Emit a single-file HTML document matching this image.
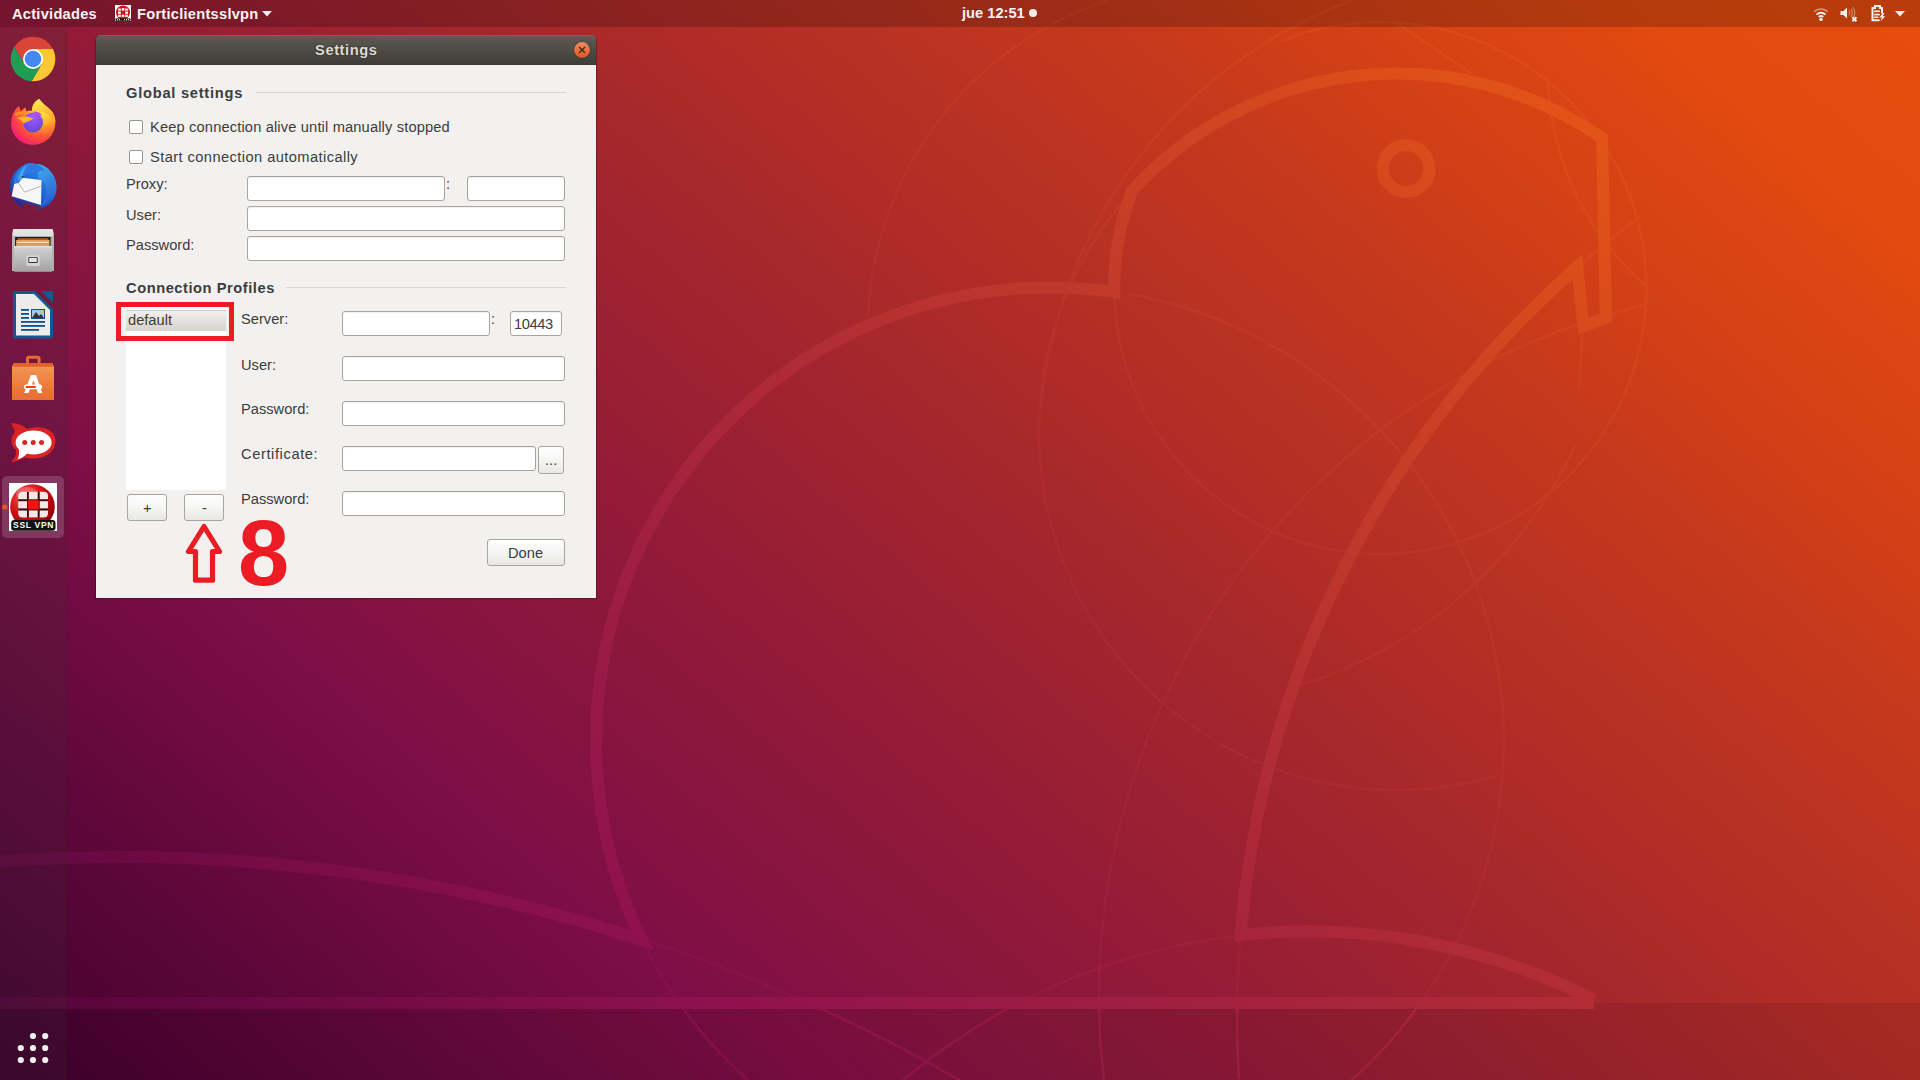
<!DOCTYPE html>
<html>
<head>
<meta charset="utf-8">
<style>
html,body{margin:0;padding:0;width:1920px;height:1080px;overflow:hidden;}
body{position:relative;font-family:"Liberation Sans",sans-serif;background:#8c1839;}
#bg{position:absolute;left:0;top:0;width:1920px;height:1080px;background:linear-gradient(41deg,rgb(64, 0, 46) 0%,rgb(126, 14, 70) 25%,rgb(160, 35, 47) 50%,rgb(200, 58, 27) 75%,rgb(212, 64, 22) 80.4%,rgb(218, 68, 20) 85.3%,rgb(227, 74, 16) 90.9%,rgb(232, 77, 13) 100%);}
#art{position:absolute;left:0;top:0;}
#band{position:absolute;left:0;top:1003px;width:1920px;height:77px;background:rgba(0,0,0,0.08);}
#topbar{position:absolute;left:0;top:0;width:1920px;height:27px;background:rgba(0,0,0,0.20);color:#f4f4f2;font-weight:bold;font-size:14.67px;}
#dock{position:absolute;left:0;top:27px;width:66px;height:1053px;background:rgba(52,52,52,0.17);border-right:1px solid rgba(40,30,40,0.18);}
.t{position:absolute;line-height:17px;white-space:nowrap;font-size:14.67px;color:#3c3c3c;}
.b{font-weight:bold;}
.e{position:absolute;box-sizing:border-box;background:#fff;border:1px solid #a8a49d;border-radius:3px;box-shadow:inset 0 1px 1px rgba(0,0,0,0.06);}
.cb{position:absolute;box-sizing:border-box;width:14px;height:14px;background:#fff;border:1px solid #99958e;border-radius:2px;}
.btn{position:absolute;box-sizing:border-box;border:1px solid #a9a59e;border-radius:3px;background:linear-gradient(#fefefe 0%,#f6f6f5 45%,#e9e8e6 100%);}
.sep{position:absolute;height:1px;background:#d9d6d1;}
.ic{position:absolute;}
</style>
</head>
<body>
<div id="bg"></div>
<div id="band"></div>
<svg id="art" width="1920" height="1080" viewBox="0 0 1920 1080">
 <defs><linearGradient id="gk" gradientUnits="userSpaceOnUse" x1="279.4" y1="1322.9" x2="1640.6" y2="-242.9"><stop offset="0%" stop-color="rgb(77, 2, 57)"/><stop offset="25%" stop-color="rgb(142, 17, 79)"/><stop offset="50%" stop-color="rgb(174, 42, 55)"/><stop offset="75%" stop-color="rgb(211, 71, 32)"/><stop offset="80.4%" stop-color="rgb(222, 78, 26)"/><stop offset="85.3%" stop-color="rgb(228, 83, 24)"/><stop offset="90.9%" stop-color="rgb(237, 90, 19)"/><stop offset="100%" stop-color="rgb(242, 93, 16)"/></linearGradient><linearGradient id="gt" gradientUnits="userSpaceOnUse" x1="279.4" y1="1322.9" x2="1640.6" y2="-242.9"><stop offset="0%" stop-color="rgb(70, 1, 51)"/><stop offset="25%" stop-color="rgb(134, 16, 75)"/><stop offset="50%" stop-color="rgb(167, 39, 51)"/><stop offset="75%" stop-color="rgb(205, 64, 30)"/><stop offset="80.4%" stop-color="rgb(217, 71, 24)"/><stop offset="85.3%" stop-color="rgb(223, 75, 22)"/><stop offset="90.9%" stop-color="rgb(232, 82, 18)"/><stop offset="100%" stop-color="rgb(237, 85, 15)"/></linearGradient></defs>
 <g fill="none" stroke="url(#gt)" stroke-width="2.5">
  <path d="M 1280.8 41.4 A 266 266 0 1 1 1132.7 190.9"/>
  <path d="M 1398 24 L 1472 74"/>
  <path d="M 1498.7 775.3 A 358 358 0 0 1 1132.2 191.1"/>
  <path d="M 868.3 316.1 A 346 346 0 0 1 1107.1 0.9"/>
  <path d="M 1039.6 426.7 A 481 481 0 0 1 1371.4 -6.5"/>
  <path d="M 1128.6 294.1 A 453.9 453.9 0 0 1 1341.6 1088.8"/>
  <path d="M 1647.2 287.1 A 285 285 0 0 1 1548.2 80.9"/>
  <path d="M 1567.3 276.2 A 998.3 998.3 0 0 1 1641.5 215.6"/>
  <path d="M 1238.9 1079.0 A 998.3 998.3 0 0 1 1240.8 931.1"/>
  <path d="M 640.2 938.4 A 1660 1660 0 0 1 972.5 1087.7"/>
  <path d="M 752.0 1083.7 A 453.9 453.9 0 0 1 641.8 940.1"/>
  <path d="M 895.7 1086.5 A 630 630 0 0 1 1239.9 935.8"/>
  <path d="M 1104.3 1083.8 A 712 712 0 0 1 1644.8 304.7"/>
  <path d="M 1574.9 445.8 A 449 449 0 0 1 1297.0 686.1"/>
  <path d="M 1583 326 L 1579 390"/>
 </g>
 <g fill="none" stroke="url(#gk)" stroke-width="12" stroke-linejoin="miter">
  <path d="M -5 862 A 1660 1660 0 0 1 641.8 940 A 453.9 453.9 0 0 1 1114.4 292 A 266 266 0 0 1 1132 191 A 358 358 0 0 1 1602 138 L 1606 318 L 1583.5 326 L 1577.3 267 A 998.3 998.3 0 0 0 1240.5 935 A 630 630 0 0 1 1594 1000"/>
  <path d="M -5 1003 L 1594 1003"/>
  <circle cx="1406" cy="168.5" r="23.5" stroke-width="12"/>
 </g>
</svg>

<!-- top bar -->
<div id="topbar">
 <div class="t" style="left:12px;top:6px;color:#f4f4f2;font-weight:bold;letter-spacing:0.25px;">Actividades</div>
 <svg class="ic" style="left:115px;top:5px" width="16" height="16" viewBox="0 0 16 16">
  <rect x="0" y="0" width="16" height="16" fill="#fff"/>
  <circle cx="8" cy="7.5" r="7" fill="#d0121b"/>
  <g fill="#fff"><rect x="3.2" y="3.5" width="2.6" height="2.2"/><rect x="6.7" y="3.2" width="2.6" height="2.4"/><rect x="10.2" y="3.5" width="2.6" height="2.2"/>
  <rect x="3" y="6.6" width="2.8" height="2.2"/><rect x="10.2" y="6.6" width="2.8" height="2.2"/>
  <rect x="3.2" y="9.7" width="2.6" height="2.2"/><rect x="6.7" y="9.7" width="2.6" height="2.2"/><rect x="10.2" y="9.7" width="2.6" height="2.2"/></g>
  <rect x="0.5" y="13.4" width="15" height="2.4" fill="#111"/><g fill="#ddd"><rect x="2" y="14" width="1" height="1.2"/><rect x="4" y="14" width="1" height="1.2"/><rect x="9" y="14" width="1" height="1.2"/><rect x="11" y="14" width="1" height="1.2"/><rect x="13" y="14" width="1" height="1.2"/></g>
 </svg>
 <div class="t" style="left:137px;top:6px;color:#f4f4f2;font-weight:bold;letter-spacing:0.25px;">Forticlientsslvpn</div>
 <svg class="ic" style="left:262px;top:11px" width="10" height="6" viewBox="0 0 10 6"><path d="M0 0 L10 0 L5 5.5 Z" fill="#f0f0ee"/></svg>
 <div class="t" style="left:962px;top:5px;color:#f4f4f2;font-weight:bold;">jue 12:51</div>
 <div style="position:absolute;left:1029px;top:9px;width:8px;height:8px;border-radius:50%;background:#eeeeec;"></div>
 <!-- wifi -->
 <svg class="ic" style="left:1813px;top:6px" width="16" height="16" viewBox="0 0 16 16">
  <path d="M1.2 5.8 A9.5 9.5 0 0 1 14.8 5.8" stroke="rgba(255,255,255,0.45)" stroke-width="1.6" fill="none"/>
  <path d="M3.6 8.6 A6.2 6.2 0 0 1 12.4 8.6" stroke="#f2f2f2" stroke-width="1.8" fill="none"/>
  <path d="M5.8 11 A3.2 3.2 0 0 1 10.2 11" stroke="#f2f2f2" stroke-width="1.8" fill="none"/>
  <circle cx="8" cy="13.4" r="1.7" fill="#f2f2f2"/>
 </svg>
 <!-- volume -->
 <svg class="ic" style="left:1840px;top:6px" width="18" height="16" viewBox="0 0 18 16">
  <path d="M0.5 5 L3.5 5 L7 1.5 L7 12.5 L3.5 9 L0.5 9 Z" fill="#f2f2f2"/>
  <path d="M9 4.5 Q10.5 7 9 9.5 M11 2.8 Q13.5 7 11 11.2 M13 1 Q16.5 7 13 13" stroke="rgba(255,255,255,0.35)" stroke-width="1.3" fill="none"/>
  <path d="M12.4 11.2 L16.4 15.2 M16.4 11.2 L12.4 15.2" stroke="#f2f2f2" stroke-width="2"/>
 </svg>
 <!-- battery -->
 <svg class="ic" style="left:1870px;top:4px" width="16" height="18" viewBox="0 0 16 18">
  <path d="M12 9.5 L12 4 L10 4 L10 2 L5 2 L5 4 L2.5 4 L2.5 16.2 L9.6 16.2" stroke="#f2f2f2" stroke-width="2" fill="none"/>
  <rect x="4.2" y="6.4" width="5.6" height="1.7" fill="#f2f2f2"/><rect x="4.2" y="9.75" width="5.6" height="1.7" fill="#f2f2f2"/><rect x="4.2" y="12.5" width="4.2" height="1.5" fill="#f2f2f2"/>
  <path d="M12.8 9 L9.4 13.6 L12 13.6 L10.4 17.4 L15.2 12.2 L12.8 12.2 L14.4 9 Z" fill="#f2f2f2"/>
 </svg>
 <svg class="ic" style="left:1895px;top:11px" width="10" height="6" viewBox="0 0 10 6"><path d="M0 0 L10 0 L5 5.5 Z" fill="#f0f0ee"/></svg>
</div>

<!-- dock -->
<div id="dock"></div>
<svg style="position:absolute;left:0;top:27px" width="67" height="1053" viewBox="0 27 67 1053"><defs>
<radialGradient id="ffo" cx="0.7" cy="0.2" r="0.9"><stop offset="0" stop-color="#fff44f"/><stop offset="0.35" stop-color="#ffa52a"/><stop offset="0.7" stop-color="#ff4a3d"/><stop offset="1" stop-color="#e31587"/></radialGradient>
<linearGradient id="ffp" x1="0" y1="0" x2="0.3" y2="1"><stop offset="0" stop-color="#b833e1"/><stop offset="1" stop-color="#5b4fd6"/></linearGradient>
<linearGradient id="tbb" x1="0" y1="0" x2="1" y2="1"><stop offset="0" stop-color="#3aa0f0"/><stop offset="1" stop-color="#1f4fb8"/></linearGradient>
<linearGradient id="fcab" x1="0" y1="0" x2="0" y2="1"><stop offset="0" stop-color="#e6e6e6"/><stop offset="1" stop-color="#a7a7a7"/></linearGradient>
<linearGradient id="bag" x1="0" y1="0" x2="0" y2="1"><stop offset="0" stop-color="#f29a5a"/><stop offset="1" stop-color="#e8692c"/></linearGradient>
<radialGradient id="vpn" cx="0.35" cy="0.3" r="0.8"><stop offset="0" stop-color="#ff5555"/><stop offset="0.5" stop-color="#d40f14"/><stop offset="1" stop-color="#7a0005"/></radialGradient>
</defs><g><path d="M33.00 49.00 L52.93 49.00 A22.3 22.3 0 0 0 14.37 46.74 L24.34 64.00 L33 59 Z" fill="#db4437"/><path d="M41.66 64.00 L31.69 81.26 A22.3 22.3 0 0 0 52.93 49.00 L33.00 49.00 L33 59 Z" fill="#fcc934"/><path d="M24.34 64.00 L14.37 46.74 A22.3 22.3 0 0 0 31.69 81.26 L41.66 64.00 L33 59 Z" fill="#1e9e55"/><circle cx="33" cy="59" r="10.00" fill="#fff"/><circle cx="33" cy="59" r="8.3" fill="#4688f1"/></g><g>
<radialGradient id="ffb" cx="0.72" cy="0.25" r="0.95"><stop offset="0" stop-color="#fff04a"/><stop offset="0.3" stop-color="#ffb02a"/><stop offset="0.62" stop-color="#ff4f36"/><stop offset="0.85" stop-color="#f5246a"/><stop offset="1" stop-color="#e0108c"/></radialGradient>
<linearGradient id="ffl" x1="0" y1="0" x2="0.4" y2="1"><stop offset="0" stop-color="#fff44f"/><stop offset="1" stop-color="#ffa82a"/></linearGradient>
<radialGradient id="ffg" cx="0.5" cy="0.2" r="0.9"><stop offset="0" stop-color="#a45cff"/><stop offset="0.6" stop-color="#7a4be8"/><stop offset="1" stop-color="#4f4fc8"/></radialGradient>
<path d="M11.6 119 C12.5 113 15.5 108.5 19 106 L20.6 111.2 L25.2 107.4 L26.4 111.3 Q29 110.6 32 110.6 C32 104.5 35.5 100.5 39.2 98.9 C42.5 103 46 106 49 108.5 C53.5 112.5 55.6 117 55.3 123 C55.3 135 45.5 144.8 33 144.8 C20.5 144.8 11 135.5 11 123.5 Z" fill="url(#ffb)"/>
<path d="M32 110.8 C32 104.5 35.5 100.5 39.2 98.9 C42.5 103 46 106 49 108.5 C53.5 112.5 55.6 117 55.3 123 C53 118 48 114 42 112 Z" fill="url(#ffl)"/>
<circle cx="33" cy="122.5" r="10" fill="url(#ffg)"/>
<path d="M16.2 118.6 C20 116.4 27 115.2 33.2 118.6 C30.5 121.2 26.5 121.5 23.6 123.6 C22.2 120.2 19.5 119 16.2 118.6 Z" fill="#ffb52c"/>
<path d="M14 114 C18 111.5 23 111 26.5 113 C22 113 18.5 114.5 16.5 116.5 Z" fill="#ff9a1f" opacity="0.8"/>
<path d="M33.5 111.6 C37.5 111.2 40.5 112.8 42 115.6 C40 115.2 38.2 115.6 37 116.2 Z" fill="#c04ae6"/>
</g><g>
<linearGradient id="tbr" x1="0.8" y1="0.1" x2="0.2" y2="0.9"><stop offset="0" stop-color="#2f8ff0"/><stop offset="0.55" stop-color="#1f5fcf"/><stop offset="1" stop-color="#2a2585"/></linearGradient>
<linearGradient id="tbf" x1="0" y1="0" x2="0.3" y2="1"><stop offset="0" stop-color="#41b2f5"/><stop offset="1" stop-color="#2a62d0"/></linearGradient>
<circle cx="33.2" cy="187" r="23.4" fill="url(#tbr)"/>
<path d="M21 202.5 L40.8 206.2 L35 211.2 L26 210.5 Z" fill="rgb(122,26,61)"/>
<path d="M15.4 177.1 L41.5 180 L41 205.1 L11.7 196.3 Z" fill="#f6f6f7"/>
<path d="M15.8 179 L24.5 192.2 L41.2 186" stroke="#77777f" stroke-width="0.5" fill="none"/>
<path d="M38.5 178 C44 180 47 186 46 193 C45 199 43 203 40.5 207 C45 205 50 200 52 195 C55 188 55 180 52 174 C49 168 44 165 38 164 Z" fill="url(#tbf)"/>
<path d="M13.8 184 C14.5 173 20 165.5 28 163.2 C35 162.5 41 165.5 45 170.5 C40.5 170 37 171.5 34.8 175 C31.5 171.8 26.5 172.3 23.5 176.5 L18.5 183 Z" fill="#2b7be0"/>
<path d="M18 180 C19 172 23 167 28 164.5 C24 169 22.5 174 22.5 179 Z" fill="#4fb8f5" opacity="0.7"/>
<circle cx="22.6" cy="176.9" r="0.9" fill="#222"/>
</g><g>
<linearGradient id="fdr" x1="0" y1="0" x2="0" y2="1"><stop offset="0" stop-color="#d2d2d2"/><stop offset="1" stop-color="#a3a3a3"/></linearGradient>
<linearGradient id="fcap" x1="0" y1="0" x2="0" y2="1"><stop offset="0" stop-color="#e4e4e4"/><stop offset="1" stop-color="#c4c4c4"/></linearGradient>
<path d="M13.2 229 L52.5 229 L53.7 233 L53.7 271 L12.3 271 L12.3 233 Z" fill="url(#fcap)"/>
<rect x="12.3" y="236" width="41.4" height="35" fill="#b4b4b4"/>
<rect x="15.1" y="237" width="35.5" height="9" fill="#1c1c1c"/>
<rect x="17.5" y="238.2" width="31" height="2.2" fill="#c4561c"/>
<rect x="16.1" y="240" width="33.5" height="6" fill="#eca452"/>
<rect x="17" y="242.2" width="31.5" height="0.9" fill="#fff6e8"/>
<rect x="16.1" y="243.6" width="33.5" height="0.6" fill="#d06a28"/>
<rect x="14.1" y="246.3" width="37.8" height="25.5" fill="url(#fdr)"/>
<rect x="14.1" y="246.3" width="37.8" height="1" fill="#e8e8e8"/>
<rect x="26.3" y="255.2" width="13.4" height="10.9" rx="1.5" fill="#d4d4d4"/>
<rect x="28.3" y="257" width="9.4" height="6" rx="1" fill="#333"/>
<rect x="29.2" y="257.8" width="7.6" height="4.2" fill="#e2e2e2"/>
</g><g>
<path d="M13 293 Q13 291 15 291 L35 291 L53 309 L53 336.5 Q53 338.5 51 338.5 L15 338.5 Q13 338.5 13 336.5 Z" fill="#0f5a8e"/>
<path d="M16 294 L34 294 L50 310 L50 335.5 L16 335.5 Z" fill="#ececec"/>
<path d="M40.8 291 L51.3 291 Q53 291 53 292.7 L53 303 Z" fill="#0f5a8e"/>
<g fill="#10508a"><rect x="21" y="309" width="8" height="1.8"/><rect x="21" y="313" width="8" height="1.8"/><rect x="21" y="317" width="8" height="1.8"/>
<rect x="21" y="321" width="24" height="1.8"/><rect x="21" y="325" width="24" height="1.8"/><rect x="21" y="329" width="18" height="1.8"/></g>
<rect x="31" y="309" width="14" height="10" fill="#10508a"/><rect x="32" y="310" width="12" height="8" fill="#9ccbe8"/>
<path d="M41.2 310 L44 310 L44 313.2 A3 3 0 0 1 41.2 310 Z" fill="#e8c23a"/><path d="M32 318 L36 312 L39 316 L41 314 L44 318 Z" fill="#333"/>
</g><g>
<path d="M27.5 370.7 L27.5 358.6 Q27.5 357.2 29 357.2 L37.6 357.2 Q39.1 357.2 39.1 358.6 L39.1 370.7" stroke="#ea6c2c" stroke-width="2.9" fill="none"/>
<path d="M14 362.9 L52 362.9 L54 366.5 L54 400 L12 400 L12 366.5 Z" fill="url(#bag)"/>
<path d="M14 362.9 L52 362.9 L54 366.8 L12 366.8 Z" fill="#e2612a"/>
<rect x="12" y="389.3" width="42" height="10.7" fill="#e8743c" opacity="0.5"/>
<path d="M30.9 375 L36.1 375 L42.2 393 L38 393 L33.5 380.6 L28.4 393 L24.2 393 Z" fill="#fff"/>
<rect x="23.9" y="384.6" width="18.3" height="4.6" rx="2.3" fill="#fff"/>
<rect x="25.5" y="386" width="10.4" height="1.9" rx="0.9" fill="#e2470e"/>
</g><g>
<path d="M11 423 C18 423 24 426 27 429 C36 425.5 48.5 427 53.5 434 C57.5 440 56 452 44 456.5 C37 459.5 29 458.5 25 457.5 C20 460 15 462 11 462 C15 458 17 454 16 450 C10 445 10 437 15 432 C14 428 12 425 11 423 Z" fill="#db2323"/>
<ellipse cx="33.6" cy="442.5" rx="18" ry="11.9" fill="#fff"/>
<path d="M18.6 447 C19.6 451.5 19.2 456 17.5 459.5 C21 458.5 24.5 456.5 27.2 453.6 Z" fill="#fff"/>
<circle cx="24.7" cy="442.5" r="2.5" fill="#db2323"/><circle cx="33.2" cy="442.5" r="2.5" fill="#db2323"/><circle cx="41.5" cy="442.5" r="2.5" fill="#db2323"/>
</g><rect x="2" y="476" width="62" height="62" rx="5" fill="rgba(255,255,255,0.16)"/>
<circle cx="4.8" cy="507" r="2.6" fill="#e95420"/>
<g>
<rect x="9" y="483" width="48" height="48" fill="#fff"/>
<circle cx="32.5" cy="506.5" r="22.3" fill="url(#vpn)"/>
<ellipse cx="27" cy="494" rx="11" ry="7" fill="#fff" opacity="0.22"/>
<rect x="18.4" y="492" width="29.4" height="25.2" rx="3" fill="#3a0606"/>
<g fill="#f6e6e6">
<path d="M18.2 499.3 L18.2 496 Q18.2 491.8 22.4 491.8 L27 491.8 L27 499.3 Z"/>
<rect x="28.8" y="491.8" width="8.9" height="7.5"/>
<path d="M39.7 491.8 L43.8 491.8 Q48 491.8 48 496 L48 499.3 L39.7 499.3 Z"/>
<rect x="18.2" y="501.2" width="8.8" height="7.2"/>
<rect x="39.7" y="501.2" width="8.3" height="7.2"/>
<path d="M18.2 510.4 L27 510.4 L27 517.4 L22.4 517.4 Q18.2 517.4 18.2 513.2 Z"/>
<rect x="28.8" y="510.4" width="8.9" height="7"/>
<path d="M39.7 510.4 L48 510.4 L48 513.2 Q48 517.4 43.8 517.4 L39.7 517.4 Z"/>
</g>
<rect x="27.8" y="500.2" width="10.9" height="9.2" fill="#ff1010"/>
<rect x="11.2" y="520" width="44.3" height="10.8" rx="3" fill="#111"/>
<text x="33.6" y="528.3" text-anchor="middle" font-family="Liberation Sans" font-weight="bold" font-size="8.5" fill="#fff" letter-spacing="0.7">SSL VPN</text>
</g<circle cx="20.8" cy="1036" r="3.1" fill="#eeeeec"/><circle cx="33" cy="1036" r="3.1" fill="#eeeeec"/><circle cx="45.2" cy="1036" r="3.1" fill="#eeeeec"/><circle cx="20.8" cy="1048" r="3.1" fill="#eeeeec"/><circle cx="33" cy="1048" r="3.1" fill="#eeeeec"/><circle cx="45.2" cy="1048" r="3.1" fill="#eeeeec"/><circle cx="20.8" cy="1060" r="3.1" fill="#eeeeec"/><circle cx="33" cy="1060" r="3.1" fill="#eeeeec"/><circle cx="45.2" cy="1060" r="3.1" fill="#eeeeec"/></svg>

<!-- dialog -->
<div style="position:absolute;left:96px;top:40px;width:500px;height:558px;background:#f2f1f0;box-shadow:0 0 1px 1px rgba(40,0,20,0.3);"></div>
<div style="position:absolute;left:96px;top:35px;width:500px;height:30px;border-radius:5px 5px 0 0;background:linear-gradient(#5f5d55 0%,#57554d 20%,#48473f 70%,#3d3c37 100%);box-shadow:inset 0 1px 0 rgba(255,255,255,0.08);"></div>
<div class="t b" style="left:315px;top:42px;color:#dfdbd2;letter-spacing:0.6px;text-shadow:0 0 2px rgba(0,0,0,0.6);">Settings</div>
<svg class="ic" style="left:572px;top:40px" width="20" height="20" viewBox="0 0 20 20">
 <defs><linearGradient id="cg" x1="0" y1="0" x2="0" y2="1"><stop offset="0" stop-color="#f58c66"/><stop offset="1" stop-color="#e5561f"/></linearGradient></defs>
 <circle cx="10" cy="10" r="8.6" fill="#2e2d2a" opacity="0.55"/>
 <circle cx="10" cy="10" r="7.9" fill="url(#cg)"/>
 <path d="M7 7 L13 13 M13 7 L7 13" stroke="#2c2a20" stroke-width="1.3"/>
</svg>

<div class="t b" style="left:126px;top:85px;letter-spacing:0.75px;">Global settings</div>
<div class="sep" style="left:256px;top:92px;width:310px;"></div>

<div class="cb" style="left:129px;top:120px;"></div>
<div class="t" style="left:150px;top:119px;letter-spacing:0.15px;">Keep connection alive until manually stopped</div>
<div class="cb" style="left:129px;top:150px;"></div>
<div class="t" style="left:150px;top:149px;letter-spacing:0.42px;">Start connection automatically</div>

<div class="t" style="left:126px;top:176px;">Proxy:</div>
<div class="e" style="left:247px;top:176px;width:198px;height:25px;"></div>
<div class="t" style="left:446px;top:176px;">:</div>
<div class="e" style="left:467px;top:176px;width:98px;height:25px;"></div>
<div class="t" style="left:126px;top:207px;">User:</div>
<div class="e" style="left:247px;top:206px;width:318px;height:25px;"></div>
<div class="t" style="left:126px;top:237px;">Password:</div>
<div class="e" style="left:247px;top:236px;width:318px;height:25px;"></div>

<div class="t b" style="left:126px;top:280px;letter-spacing:0.55px;">Connection Profiles</div>
<div class="sep" style="left:286px;top:287px;width:280px;"></div>

<!-- list -->
<div style="position:absolute;left:126px;top:306px;width:100px;height:184px;background:#fff;"></div>
<div style="position:absolute;left:126px;top:310px;width:100px;height:21px;background:linear-gradient(#f1f0ee,#d6d3cf);border-top:1px solid #cfccc7;box-sizing:border-box;"></div>
<div class="t" style="left:128px;top:312px;">default</div>

<div class="t" style="left:241px;top:311px;">Server:</div>
<div class="e" style="left:342px;top:311px;width:148px;height:25px;"></div>
<div class="t" style="left:491px;top:311px;">:</div>
<div class="e" style="left:510px;top:311px;width:52px;height:25px;"></div>
<div class="t" style="left:514px;top:316px;letter-spacing:-0.4px;">10443</div>

<div class="t" style="left:241px;top:357px;">User:</div>
<div class="e" style="left:342px;top:356px;width:223px;height:25px;"></div>
<div class="t" style="left:241px;top:401px;">Password:</div>
<div class="e" style="left:342px;top:401px;width:223px;height:25px;"></div>
<div class="t" style="left:241px;top:446px;letter-spacing:0.6px;">Certificate:</div>
<div class="e" style="left:342px;top:446px;width:194px;height:25px;"></div>
<div class="btn" style="left:538px;top:446px;width:26px;height:28px;"></div>
<div class="t" style="left:545px;top:452px;">...</div>
<div class="t" style="left:241px;top:491px;">Password:</div>
<div class="e" style="left:342px;top:491px;width:223px;height:25px;"></div>

<div class="btn" style="left:127px;top:494px;width:40px;height:27px;"></div>
<div class="t" style="left:143px;top:500px;">+</div>
<div class="btn" style="left:184px;top:494px;width:40px;height:27px;"></div>
<div class="t" style="left:202px;top:500px;">-</div>

<div class="btn" style="left:487px;top:539px;width:78px;height:27px;"></div>
<div class="t" style="left:508px;top:545px;">Done</div>

<!-- annotations -->
<div style="position:absolute;left:116px;top:302px;width:118px;height:39px;box-sizing:border-box;border:5px solid #ed1c24;"></div>
<svg class="ic" style="left:180px;top:518px" width="50" height="70" viewBox="180 518 50 70">
 <path d="M204 526.5 L188.5 551.5 L195.5 551.5 L195.5 580.2 L212.5 580.2 L212.5 551.5 L219.5 551.5 Z" fill="none" stroke="#ed1c24" stroke-width="5.2" stroke-linejoin="round"/>
</svg>
<div style="position:absolute;left:238px;top:503px;font:bold 92px 'Liberation Sans',sans-serif;line-height:100px;color:#ed1c24;">8</div>
</body>
</html>
